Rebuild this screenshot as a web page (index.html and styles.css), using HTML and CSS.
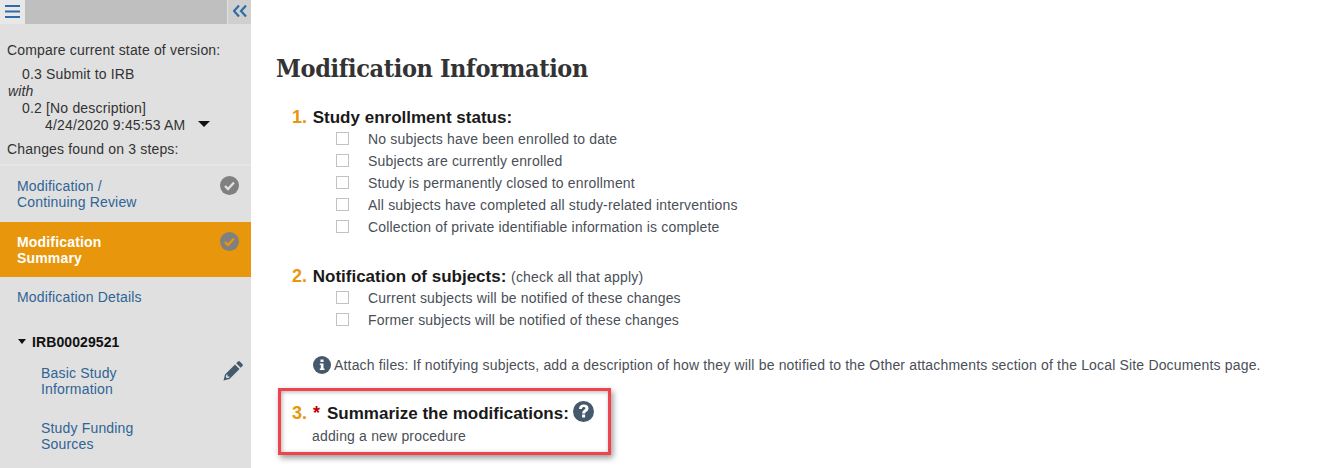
FILE: index.html
```html
<!DOCTYPE html>
<html lang="en">
<head>
    <meta charset="UTF-8">
    <title>Modification Information</title>
    <link rel="stylesheet" href="styles.css">
</head>
<body>

<div class="page">
    <aside class="sidebar">
        <div class="topbar">
            <div class="menu-btn">
                <svg width="15" height="13" viewBox="0 0 15 13"><path d="M0 0h15v2H0zM0 5.500h15v2H0zM0 11h15v2H0z" fill="#2f6ca6"/></svg>
            </div>
            <div class="topbar-fill"></div>
            <div class="collapse-btn">
                <svg width="14" height="12" viewBox="0 0 14 12"><path d="M6 .5L1 6l5 5.500M13 .5L8 6l5 5.500" fill="none" stroke="#2f6ca6" stroke-width="2.200"/></svg>
            </div>
        </div>

        <div class="compare">
            <div class="compare-title">Compare current state of version:</div>
            <div class="version">0.3 Submit to IRB</div>
            <div class="with">with</div>
            <div class="version">0.2 [No description]</div>
            <div class="version-date">4/24/2020 9:45:53 AM <span class="caret"></span></div>
            <div class="changes">Changes found on 3 steps:</div>
        </div>

        <ul class="steps">
            <li class="step">
                <a>Modification /<br>Continuing Review</a>
                <svg class="step-icon" width="19" height="19" viewBox="0 0 19 19"><circle cx="9.500" cy="9.500" r="9.500" fill="#808080"/><path d="M5 10l3 3 6-6.500" fill="none" stroke="#e0e0e0" stroke-width="2.400"/></svg>
            </li>
            <li class="step active">
                <a>Modification<br>Summary</a>
                <svg class="step-icon" width="19" height="19" viewBox="0 0 19 19"><circle cx="9.500" cy="9.500" r="9.500" fill="#808080"/><path d="M5 10l3 3 6-6.500" fill="none" stroke="#e8960c" stroke-width="2.400"/></svg>
            </li>
            <li class="step single"><a>Modification Details</a></li>
        </ul>

        <div class="group-title"><span class="caret small"></span>IRB00029521</div>
        <ul class="substeps">
            <li class="substep">
                <a>Basic Study<br>Information</a>
                <svg class="edit-icon" width="20" height="20" viewBox="0 0 20 20"><path d="M15 0.500l-1.800 1.800 4.500 4.500 1.800-1.800q.8-.9 0-1.800l-2.700-2.700q-.9-.8-1.800 0zM12 3.500L2 13.500 .5 19.500l6-1.500 10-10zM3.500 13.500l1 0 0 2 2 0 0 1-2.500 .8-1.300-1.300z" fill="#44596b" fill-rule="evenodd"/></svg>
            </li>
            <li class="substep"><a>Study Funding<br>Sources</a></li>
        </ul>
    </aside>

    <main class="content">
        <h1>Modification Information</h1>

        <section class="question q1">
            <h3><span class="num">1.</span> Study enrollment status:</h3>
            <label class="option"><span class="box"></span>No subjects have been enrolled to date</label>
            <label class="option"><span class="box"></span>Subjects are currently enrolled</label>
            <label class="option"><span class="box"></span>Study is permanently closed to enrollment</label>
            <label class="option"><span class="box"></span>All subjects have completed all study-related interventions</label>
            <label class="option"><span class="box"></span>Collection of private identifiable information is complete</label>
        </section>

        <section class="question q2">
            <h3><span class="num">2.</span> Notification of subjects: <span class="hint">(check all that apply)</span></h3>
            <label class="option"><span class="box"></span>Current subjects will be notified of these changes</label>
            <label class="option"><span class="box"></span>Former subjects will be notified of these changes</label>
        </section>

        <p class="note">
            <svg width="18" height="18" viewBox="0 0 18 18"><circle cx="9" cy="9" r="9" fill="#44596b"/><path d="M7.500 3.500h3v2.500h-3zM6.800 7.500h3.700v5h1v1.500H6.800v-1.500h1v-3.500h-1z" fill="#fff"/></svg>
            Attach files: If notifying subjects, add a description of how they will be notified to the Other attachments section of the Local Site Documents page.
        </p>

        <section class="highlight">
            <h3><span class="num">3.</span> <span class="req">*</span> Summarize the modifications:
                <svg class="help-icon" width="21" height="21" viewBox="0 0 21 21"><circle cx="10.500" cy="10.500" r="10.500" fill="#44596b"/><path d="M6 8q.2-4.500 4.700-4.500 4.800 0 4.800 3.900 0 2.200-2.100 3.400-1.300.8-1.300 1.800H9.100q0-2.500 1.800-3.600 1.600-1 1.600-1.700 0-1.200-1.800-1.200-1.700 0-1.900 1.900zM9.100 13.600h3v2.900h-3z" fill="#fff"/></svg>
            </h3>
            <div class="answer">adding a new procedure</div>
        </section>
    </main>
</div>

</body>
</html>
```

FILE: styles.css
```css
html, body {
    margin: 0;
    padding: 0;
    height: 468px;
    overflow: hidden;
    background-color: #ffffff;
    font-family: "Liberation Sans", Arial, sans-serif;
    font-size: 14px;
    letter-spacing: 0.17px;
    color: #4a4f57;
}

.page {
    display: flex;
    height: 468px;
}

/* sidebar */
.sidebar {
    width: 251px;
    flex: none;
    background-color: #e0e0e0;
    color: #333333;
    overflow: hidden;
}

.topbar {
    display: flex;
    height: 24px;
}

.menu-btn {
    width: 25px;
    background-color: #e8e8e8;
    display: flex;
    justify-content: center;
    padding-top: 5px;
    box-sizing: border-box;
}

.topbar-fill {
    width: 202px;
    background-color: #bfbfbf;
}

.collapse-btn {
    width: 23px;
    margin-left: 1px;
    background-color: #cfcfcf;
    display: flex;
    justify-content: center;
    padding-top: 5px;
    box-sizing: border-box;
}

.compare {
    padding: 18px 0 0 7px;
    height: 142px;
    box-sizing: border-box;
    border-bottom: 2px solid #e6e6e6;
    line-height: 17px;
}

.compare-title {
    margin-bottom: 7px;
}

.version {
    padding-left: 15px;
}

.with {
    font-style: italic;
    padding-left: 1px;
}

.version-date {
    padding-left: 38px;
}

.caret {
    display: inline-block;
    width: 0;
    height: 0;
    margin-left: 9px;
    border-left: 6px solid transparent;
    border-right: 6px solid transparent;
    border-top: 6px solid #111111;
    vertical-align: 3px;
}

.caret.small {
    margin-left: 0;
    margin-right: 6px;
    border-left-width: 4.500px;
    border-right-width: 4.500px;
    border-top-width: 5px;
}

.changes {
    margin-top: 7px;
}

.steps, .substeps {
    list-style: none;
    margin: 0;
    padding: 0;
}

.step {
    display: flex;
    justify-content: space-between;
    height: 56px;
    padding: 12px 12px 0 17px;
    box-sizing: border-box;
    line-height: 16px;
    color: #2f6496;
}

.step-icon {
    margin-top: -2px;
}

.step.active {
    height: 55px;
    background-color: #e8960c;
    color: #ffffff;
    font-weight: bold;
}

.step.single {
    height: 47px;
}

.group-title {
    margin-top: 10px;
    padding-left: 18px;
    font-weight: bold;
    letter-spacing: 0.1px;
    color: #111111;
    line-height: 17px;
}

.substep {
    display: flex;
    justify-content: space-between;
    height: 55px;
    padding: 14px 8px 0 41px;
    box-sizing: border-box;
    line-height: 16px;
    color: #2f6496;
}

.edit-icon {
    margin-top: -4px;
}

/* main */
.content {
    flex: 1;
    padding: 0 0 0 25px;
}

h1 {
    margin: 53px 0 0 0;
    font-family: "DejaVu Serif", serif;
    font-stretch: condensed;
    font-size: 25px;
    line-height: 32px;
    font-weight: bold;
    letter-spacing: -0.37px;
    color: #333333;
}

h3 {
    margin: 0;
    font-size: 17px;
    line-height: 21px;
    font-weight: bold;
    letter-spacing: 0;
    color: #1a1a1a;
}

.num {
    color: #e8960c;
    font-size: 18px;
    margin-right: 1px;
}

.question {
    padding-left: 16px;
}

.q1 {
    margin-top: 22px;
}

.q2 {
    margin-top: 28px;
}

.q2 .option:first-of-type {
    margin-top: -1px;
}

.hint {
    font-size: 14px;
    font-weight: normal;
    letter-spacing: 0.17px;
    color: #4a4f57;
}

.option {
    display: flex;
    align-items: center;
    height: 22px;
    padding-left: 44px;
    color: #4a4f57;
}

.box {
    width: 11px;
    height: 11px;
    margin-right: 19px;
    border: 1.500px solid #c2c2c2;
    margin-top: -2px;
    flex: none;
}

.note {
    margin: 25px 0 0 37px;
    line-height: 18px;
    display: flex;
    align-items: center;
    gap: 3px;
    white-space: nowrap;
}

.highlight {
    width: 333px;
    height: 67px;
    box-sizing: border-box;
    margin: 14px 0 0 2px;
    padding: 12px 0 0 11px;
    border: 3px solid #f0434b;
    box-shadow: 2px 3px 6px rgba(0, 0, 0, 0.4), inset 1px 1px 4px rgba(0, 0, 0, 0.3);
}

.req {
    color: #c00000;
    font-size: 18px;
    margin: 0 3px 0 1px;
}

.highlight h3 {
    display: flex;
    align-items: center;
    gap: 4px;
}

.help-icon {
    margin-top: -4px;
}

.answer {
    margin-top: 4px;
    line-height: 17px;
    padding-left: 20px;
}
```
